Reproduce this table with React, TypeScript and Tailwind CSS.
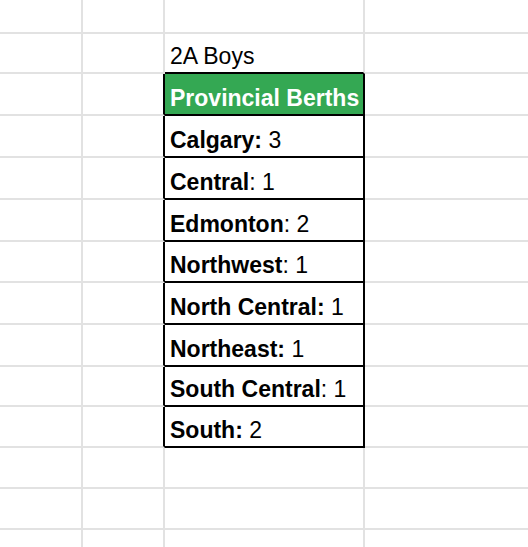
import React from "react";

type Cell = { bold: string; rest: string };

const berths: Cell[] = [
  { bold: "Calgary:", rest: " 3" },
  { bold: "Central", rest: ": 1" },
  { bold: "Edmonton", rest: ": 2" },
  { bold: "Northwest", rest: ": 1" },
  { bold: "North Central:", rest: " 1" },
  { bold: "Northeast:", rest: " 1" },
  { bold: "South Central", rest: ": 1" },
  { bold: "South:", rest: " 2" },
];

// row heights in px, tuned to the sheet grid
const tableRowHeights = ["h-[42px]", "h-[42px]", "h-[42px]", "h-[41px]", "h-[42px]", "h-[42px]", "h-[40px]", "h-[41px]"];

function EmptyCells({ black }: { black?: boolean }) {
  return (
    <>
      <div className="w-[83px] shrink-0 border-r-2 border-b-2 border-[#e2e2e2]" />
      <div
        className={
          black
            ? "w-[82px] shrink-0 border-r-2 border-r-black border-b-2 border-b-[#e2e2e2]"
            : "w-[82px] shrink-0 border-r-2 border-b-2 border-[#e2e2e2]"
        }
      />
    </>
  );
}

function RightCell() {
  return <div className="flex-1 border-b-2 border-[#e2e2e2]" />;
}

export default function App() {
  return (
    <div
      className="w-[528px] h-[547px] overflow-hidden bg-white text-black text-[23px] leading-[23px]"
      style={{ fontFamily: '"Liberation Sans", Arial, sans-serif' }}
    >
      <div className="flex h-[34px]">
        <EmptyCells />
        <div className="w-[200px] shrink-0 border-r-2 border-b-2 border-[#e2e2e2]" />
        <RightCell />
      </div>

      <div className="flex h-[40px]">
        <EmptyCells />
        <div className="w-[200px] shrink-0 flex items-end pl-[5px] pb-1 border-r-2 border-r-[#e2e2e2] border-b-2 border-b-black">
          2A Boys
        </div>
        <RightCell />
      </div>

      <div className="flex h-[42px]">
        <EmptyCells black />
        <div className="w-[200px] shrink-0 flex items-end pl-[5px] pb-1 bg-[#34a853] text-white font-bold border-r-2 border-b-2 border-black">
          Provincial Berths
        </div>
        <RightCell />
      </div>

      {berths.map((b, i) => (
        <div key={b.bold} className={`flex ${tableRowHeights[i]}`}>
          <EmptyCells black />
          <div className="w-[200px] shrink-0 flex items-end pl-[5px] pb-1 border-r-2 border-b-2 border-black whitespace-pre">
            <span className="font-bold">{b.bold}</span>
            <span>{b.rest}</span>
          </div>
          <RightCell />
        </div>
      ))}

      {["h-[41px]", "h-[41px]", "h-[41px]"].map((h, i) => (
        <div key={i} className={`flex ${h}`}>
          <EmptyCells />
          <div className="w-[200px] shrink-0 border-r-2 border-b-2 border-[#e2e2e2]" />
          <RightCell />
        </div>
      ))}
      <div className="flex h-[20px]">
        <div className="w-[83px] shrink-0 border-r-2 border-[#e2e2e2]" />
        <div className="w-[82px] shrink-0 border-r-2 border-[#e2e2e2]" />
        <div className="w-[200px] shrink-0 border-r-2 border-[#e2e2e2]" />
        <div className="flex-1" />
      </div>
    </div>
  );
}
